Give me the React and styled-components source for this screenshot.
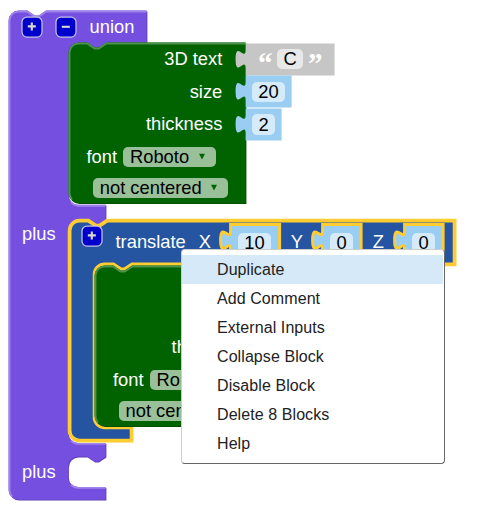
import React from "react";
import styled, { createGlobalStyle } from "styled-components";

const GlobalStyle = createGlobalStyle`
  body { margin: 0; background: #fff; }
  * { box-sizing: border-box; }
`;

const Workspace = styled.main`
  position: relative;
  width: 499px;
  height: 516px;
  overflow: hidden;
  background: #fff;
  font: 18.33px/20px "Liberation Sans", Arial, sans-serif;
  color: #fff;
  white-space: nowrap;
`;

const BlockNode = styled.section`
  position: absolute;
  left: ${(p) => p.$x}px;
  top: ${(p) => p.$y}px;
  width: ${(p) => p.$w}px;
`;

const Shape = styled.svg`
  position: absolute;
  left: 0;
  top: 0;
  width: 1px;
  height: 1px;
  overflow: visible;
`;

const Body = styled.div`
  position: relative;
  display: flex;
  flex-direction: column;
`;

const Row = styled.div`
  display: flex;
  align-items: flex-start;
  justify-content: ${(p) => (p.$end ? "flex-end" : "flex-start")};
  height: ${(p) => p.$h}px;
  padding: ${(p) => p.$pad || "0"};
  gap: ${(p) => p.$gap || 0}px;
`;

const Label = styled.span`
  display: block;
  width: ${(p) => (p.$w ? `${p.$w}px` : "auto")};
  flex: none;
`;

const Mutator = styled.button`
  flex: none;
  width: 21px;
  height: 21px;
  padding: 0;
  border: 0;
  background: transparent;
  svg { display: block; overflow: visible; }
`;

const Field = styled.span`
  display: flex;
  align-items: center;
  justify-content: center;
  flex: none;
  width: ${(p) => p.$w}px;
  height: 20.5px;
  border-radius: 5px;
  color: #000;
  background: rgba(255, 255, 255, 0.6);
`;

const Dropdown = styled(Field)`
  justify-content: space-between;
  padding: 0 10px 0 7px;
  svg { display: block; }
`;

const Quote = styled.span`
  width: 14px;
  height: 20px;
  font: bold 29px/29px "Liberation Serif", serif;
  text-align: center;
`;

const Menu = styled.ul`
  position: absolute;
  left: 181px;
  top: 249px;
  width: 264px;
  height: 215px;
  margin: 0;
  padding: 5px 1px 5px 0;
  list-style: none;
  background: #fff;
  border: 1px solid;
  border-color: #ccc #666 #666 #ccc;
  border-radius: 4px;
  color: #222;
  font-size: 16px;
  letter-spacing: 0.08px;
`;

const MenuItem = styled.li`
  height: 29px;
  padding-left: 35px;
  line-height: 29px;
  background: ${(p) => (p.$active ? "#d6e9f8" : "transparent")};
`;

const notch = "h8.75 l7.5,5 h3.75 l7.5,-5";
const backNotch = "l-7.5,5 h-3.75 l-7.5,-5 h-8.75";
const mouth = (depth) =>
  `${backNotch} a10,10 0 0 0 -10,10 v${depth} a10,10 0 0 0 10,10`;

const purple = `M0,10 a10,10 0 0 1 10,-10 ${notch} H138 V32.5 H97 ${mouth(141.7)} H97 V209.5 ${mouth(203)} H97 V446 ${mouth(10.5)} H97 V489.2 H10 a10,10 0 0 1 -10,-10 Z`;
const purpleLight = `M3.5,486 A9.2,9.2 0 0 1 .9,479 V10 A9.2,9.2 0 0 1 10,.9 H18.5 l7.5,5 h4.2 l7.5,-5 H138 M62.5,191.8 A10,10 0 0 0 69.5,195.1 H96.8 M62.5,430 A10,10 0 0 0 69.5,433.3 H96.8 M62.5,474 A10,10 0 0 0 69.5,477.3 H96.8`;
const green = `M0,10 a10,10 0 0 1 10,-10 ${notch} H177 V160.5 H10 a10,10 0 0 1 -10,-10 Z`;
const greenLight = `M3.5,157 A9.2,9.2 0 0 1 .9,150.5 V10 A9.2,9.2 0 0 1 10,.9 H18.5 l7.5,5 h4.2 l7.5,-5 H177`;
const blue = `M0,10 a10,10 0 0 1 10,-10 ${notch} H385 V43.7 H62.5 ${mouth(143)} H62 V220 H10 a10,10 0 0 1 -10,-10 Z`;
const valuePath = (w, h) =>
  `M0,0 H${w} V${h} H0 V25 c0,-12.5 -10,10 -10,-9.4 s10,3.1 10,-9.4 Z`;

function Outline({ d, fill, dark, light, lightPath, selected }) {
  return (
    <Shape aria-hidden="true">
      <g transform="translate(-.4 -.4)">
        {dark && <path d={d} fill={dark} transform="translate(.8 .8)" />}
        <path
          d={d}
          fill={fill}
          stroke={selected ? "#fc3" : "none"}
          strokeWidth={selected || 0}
        />
        {lightPath && <path d={lightPath} fill="none" stroke={light} strokeWidth="1.9" />}
      </g>
    </Shape>
  );
}

function MutatorButton({ minus }) {
  return (
    <Mutator aria-label={minus ? "Remove input" : "Add input"}>
      <svg width="21" height="21" viewBox="0 0 21 21">
        <rect
          x="0" y=".1" width="20" height="20" rx="5"
          fill="#0000cc" stroke="#c4bfe8" strokeWidth="1.25"
        />
        <path
          d={minus ? "M5.8 9.8H13.8" : "M5.8 9.4H13.8M9.8 5.4V13.4"}
          stroke="#d9d9d2"
          strokeWidth="2.1"
        />
      </svg>
    </Mutator>
  );
}

function Select({ w, children }) {
  return (
    <Dropdown $w={w}>
      {children}
      <svg width="8" height="8" viewBox="0 0 8 8">
        <path d="M1 .8H7L4 6.6Z" fill="#006400" />
      </svg>
    </Dropdown>
  );
}

function ValueBlock({ x, y, w, h = 32, field, value, text, selected, inset = 6, top = 5.5 }) {
  return (
    <BlockNode $x={x} $y={y} $w={w}>
      <Outline
        d={valuePath(w, h)}
        fill={text ? "#c6c6c6" : "#99cdf2"}
        selected={selected}
      />
      <Body>
        <Row $h={h} $pad={`${top}px 0 0 ${text ? 12 : inset}px`} $gap={5}>
          {text && <Quote>“</Quote>}
          <Field $w={field}>{value}</Field>
          {text && <Quote>”</Quote>}
        </Row>
      </Body>
    </BlockNode>
  );
}

function TextBlock({ x, y, labels, labelInset = 17 }) {
  return (
    <BlockNode $x={x} $y={y} $w={177}>
      <Outline
        d={green}
        fill="#006300"
        dark="#004f00"
        light="#4d924d"
        lightPath={greenLight}
      />
      <Body>
        <Row $h={38.5} $end $pad="5.5px 24px 0 0"><Label>{labels[0]}</Label></Row>
        <Row $h={32} $end $pad="0 24px 0 0"><Label>{labels[1]}</Label></Row>
        <Row $h={33} $end $pad="0 24px 0 0"><Label>{labels[2]}</Label></Row>
        <Row $h={31} $pad={`0 0 0 ${labelInset}px`} $gap={5}>
          <Label $w={31.5}>font</Label>
          <Select w={93}>Roboto</Select>
        </Row>
        <Row $h={25} $pad="0 0 0 23.5px"><Select w={135}>not centered</Select></Row>
      </Body>
    </BlockNode>
  );
}

const menuItems = [
  "Duplicate",
  "Add Comment",
  "External Inputs",
  "Collapse Block",
  "Disable Block",
  "Delete 8 Blocks",
  "Help",
];

export default function App() {
  return (
    <>
      <GlobalStyle />
      <Workspace>
        <BlockNode $x={9} $y={10.8} $w={138}>
          <Outline
            d={purple}
            fill="#744fe0"
            dark="#5d3fb3"
            light="#9e84e9"
            lightPath={purpleLight}
          />
          <Body>
            <Row $h={213} $pad="6.2px 0 0 13px" $gap={12.8}>
              <MutatorButton />
              <MutatorButton minus />
              <Label>union</Label>
            </Row>
            <Row $h={238} $pad="0 0 0 13px"><Label>plus</Label></Row>
            <Row $h={30} $pad="0 0 0 13px"><Label>plus</Label></Row>
          </Body>
        </BlockNode>

        <TextBlock x={69.3} y={43.3} labels={["3D text", "size", "thickness"]} labelInset={17.2} />
        <ValueBlock x={246} y={43.8} w={89} field={26} value="C" text top={5.2} />
        <ValueBlock x={246} y={76.3} w={46} field={33} value="20" />
        <ValueBlock x={246} y={109.3} w={36} field={23} value="2" top={5} />

        <BlockNode $x={69.5} $y={220.7} $w={385}>
          <Outline d={blue} fill="#2555a0" selected={3.75} />
          <Body>
            <Row $h={44} $pad="5.3px 0 0 12px">
              <MutatorButton />
              <Row $h={30} $pad="6px 0 0 13px">
                <Label $w={83.2}>translate</Label>
                <Label $w={92}>X</Label>
                <Label $w={82}>Y</Label>
                <Label>Z</Label>
              </Row>
            </Row>
          </Body>
        </BlockNode>
        <ValueBlock x={230.5} y={225} w={49} field={33} value="10" selected={3} inset={7.5} top={7.5} />
        <ValueBlock x={323} y={225} w={38.5} field={23} value="0" selected={3} inset={7} top={7.5} />
        <ValueBlock x={404.5} y={225} w={38.5} field={23} value="0" selected={3} inset={7.5} top={7.5} />
        <TextBlock x={95} y={266} labels={["", "", "thickness"]} labelInset={18} />

        <Menu>
          {menuItems.map((item, i) => (
            <MenuItem key={item} $active={i === 0}>{item}</MenuItem>
          ))}
        </Menu>
      </Workspace>
    </>
  );
}
